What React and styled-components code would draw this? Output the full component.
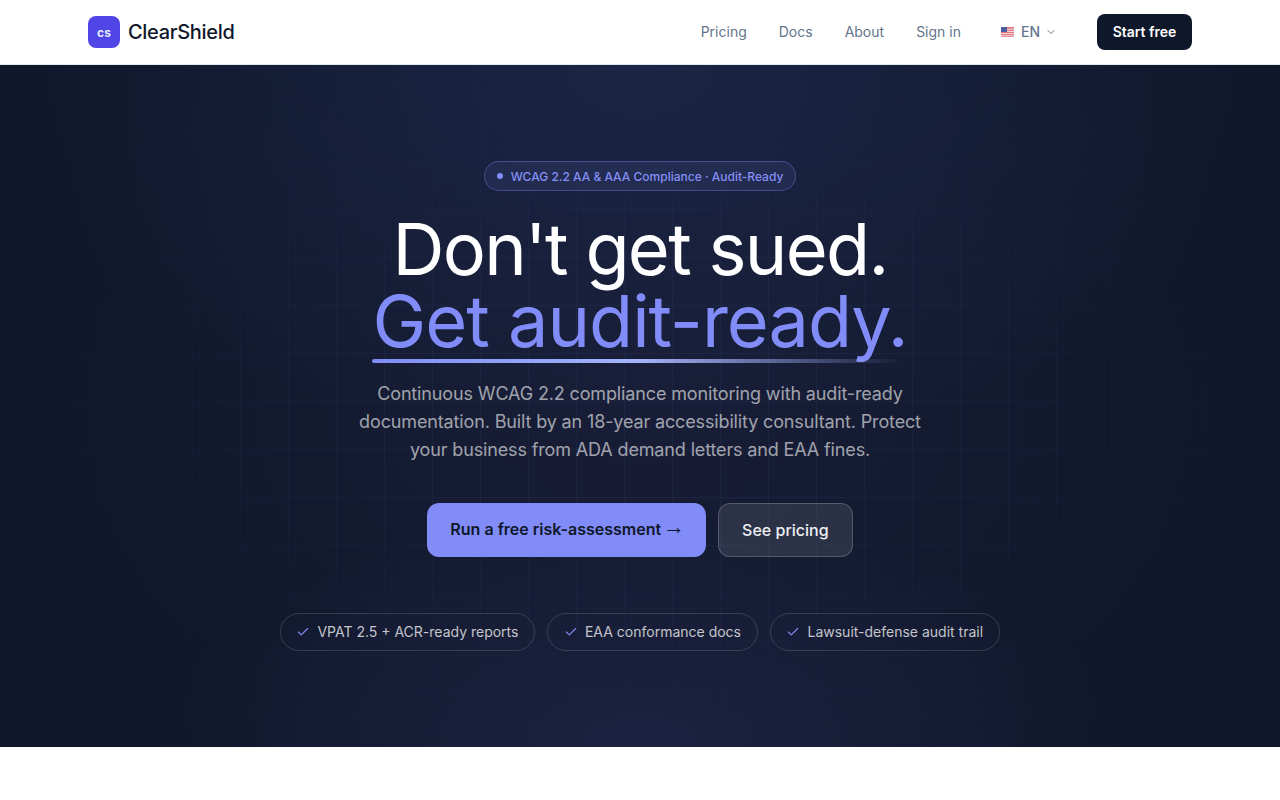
import React from 'react';
import styled, { createGlobalStyle } from 'styled-components';
import { Check, ChevronDown } from 'lucide-react';

const Global = createGlobalStyle`
    html, body { margin: 0; padding: 0; background: #fff; }
    body { font-family: Inter, "Liberation Sans", sans-serif; color: #0f172a; }
    * { box-sizing: border-box; }
`;

const Nav = styled.header`
    height: 65px;
    background: #fff;
    border-bottom: 1px solid #e2e8f0;
`;

const NavInner = styled.div`
    max-width: 1152px;
    height: 64px;
    margin: 0 auto;
    padding: 0 24px;
    display: flex;
    align-items: center;
    justify-content: space-between;
`;

const Brand = styled.a`
    display: flex;
    align-items: center;
    gap: 8px;
    font-size: 20px;
    font-weight: 500;
    letter-spacing: -0.3px;
    color: #0f172a;
`;

const BrandMark = styled.span`
    width: 32px;
    height: 32px;
    border-radius: 8px;
    background: #4f46e5;
    color: #e8ebff;
    display: flex;
    align-items: center;
    justify-content: center;
    font-size: 12px;
    font-weight: 700;
    letter-spacing: 0;
`;

const NavLinks = styled.nav`
    display: flex;
    align-items: center;
    gap: 32px;
`;

const NavLink = styled.a`
    padding-bottom: 2px;
    font-size: 14px;
    font-weight: 400;
    color: #64748b;
`;

const Lang = styled.div`
    display: flex;
    align-items: center;
    gap: 5px;
    padding: 0 8px;
    font-size: 14px;
    font-weight: 500;
    color: #64748b;

    > span { padding-bottom: 2px; }
`;

const FlagIcon = styled.svg`
    margin-right: 2px;
`;

const StartButton = styled.a`
    width: 95px;
    height: 36px;
    padding-bottom: 2px;
    display: flex;
    align-items: center;
    justify-content: center;
    border-radius: 8px;
    background: #0f172a;
    color: #fff;
    font-size: 14px;
    font-weight: 600;
`;

const Hero = styled.section`
    position: relative;
    height: 682px;
    padding-top: 96px;
    overflow: hidden;
    display: flex;
    flex-direction: column;
    align-items: center;
    background:
        radial-gradient(ellipse 50% 58% at 50% 0%, #1b2545 0%, rgba(27, 37, 69, 0) 100%),
        radial-gradient(ellipse 38% 34% at 50% 100%, #1c2240 0%, rgba(28, 34, 64, 0) 100%),
        radial-gradient(ellipse 52% 70% at 50% 50%, #181d36 0%, rgba(24, 29, 54, 0) 100%),
        #0f172a;
`;

const Grid = styled.div`
    position: absolute;
    inset: 0;
    background-image:
        linear-gradient(rgba(129, 140, 248, 0.06) 1px, transparent 1px),
        linear-gradient(90deg, rgba(129, 140, 248, 0.06) 1px, transparent 1px);
    background-size: 48px 48px;
    mask-image: radial-gradient(ellipse 50% 50% at 50% 50%, #000 40%, transparent 100%);
`;

const HeroBody = styled.div`
    position: relative;
    display: flex;
    flex-direction: column;
    align-items: center;
`;

const Badge = styled.div`
    height: 30px;
    padding: 0 12px;
    display: flex;
    align-items: center;
    gap: 8px;
    border-radius: 999px;
    border: 1px solid rgba(129, 140, 248, 0.35);
    background: rgba(129, 140, 248, 0.1);
    color: #858ff6;
    font-size: 12px;
    font-weight: 500;
`;

const Dot = styled.span`
    width: 6px;
    height: 6px;
    border-radius: 50%;
    background: #818cf8;
`;

const Title = styled.h1`
    margin: 22px 0 0;
    font-size: 72px;
    font-weight: 440;
    line-height: 72px;
    letter-spacing: -1.7px;
    text-align: center;
    color: #fff;
`;

const Accent = styled.span`
    position: relative;
    display: inline-block;
    letter-spacing: -1px;
    color: #818cf8;

    &::after {
        content: '';
        position: absolute;
        left: -1px;
        right: 5px;
        bottom: -6px;
        height: 4px;
        border-radius: 2px;
        background: linear-gradient(90deg, #818cf8, #a5b4fc 50%, transparent);
    }
`;

const Lead = styled.p`
    width: 576px;
    margin: 23px 0 0;
    font-size: 18px;
    line-height: 28px;
    letter-spacing: -0.14px;
    text-align: center;
    color: rgba(255, 255, 255, 0.6);
`;

const Actions = styled.div`
    display: flex;
    gap: 12px;
    margin-top: 39px;
`;

const PrimaryButton = styled.a`
    height: 54px;
    padding: 0 23px 3px;
    display: flex;
    align-items: center;
    gap: 2px;
    border-radius: 12px;
    background: #818cf8;
    color: #0f172a;
    font-size: 16px;
    font-weight: 600;
`;

const Arrow = styled.span`
    margin-right: -2px;
    padding-bottom: 3px;
    font-family: "Liberation Sans", sans-serif;
    font-size: 22px;
    font-weight: 700;
    line-height: 1;
`;

const GhostButton = styled.a`
    height: 54px;
    padding: 0 23px 1px;
    display: flex;
    align-items: center;
    border-radius: 12px;
    border: 1px solid rgba(255, 255, 255, 0.2);
    background: rgba(255, 255, 255, 0.1);
    color: #eef0f4;
    font-size: 16px;
    font-weight: 450;
`;

const Chips = styled.ul`
    display: flex;
    gap: 12px;
    margin: 56px 0 0;
    padding: 0;
    list-style: none;
`;

const Chip = styled.li`
    height: 38px;
    padding: 0 16px 2px 15.5px;
    display: flex;
    align-items: center;
    gap: 7px;
    border-radius: 999px;
    border: 1px solid rgba(255, 255, 255, 0.15);
    color: rgba(255, 255, 255, 0.75);
    font-size: 14px;
    svg { margin-top: 2px; color: #818cf8; }
`;

const Flag = () => (
    <FlagIcon width="13" height="10" viewBox="0 0 13 10">
        <rect width="13" height="10" rx="1" fill="#e0727c" />
        <path d="M0 2.2h13M0 4.4h13M0 6.6h13M0 8.8h13" stroke="#f4e0e2" strokeWidth="1" />
        <rect width="6" height="5" fill="#4a5fa0" />
    </FlagIcon>
);

const chips = ['VPAT 2.5 + ACR-ready reports', 'EAA conformance docs', 'Lawsuit-defense audit trail'];

export default function App() {
    return (
        <>
            <Global />
            <Nav>
                <NavInner>
                    <Brand><BrandMark>cs</BrandMark>ClearShield</Brand>
                    <NavLinks>
                        <NavLink>Pricing</NavLink>
                        <NavLink>Docs</NavLink>
                        <NavLink>About</NavLink>
                        <NavLink>Sign in</NavLink>
                        <Lang><Flag /><span>EN</span><ChevronDown size={12} /></Lang>
                        <StartButton>Start free</StartButton>
                    </NavLinks>
                </NavInner>
            </Nav>
            <Hero>
                <Grid />
                <HeroBody>
                    <Badge><Dot />WCAG 2.2 AA &amp; AAA Compliance · Audit-Ready</Badge>
                    <Title>Don't get sued.<br /><Accent>Get audit-ready.</Accent></Title>
                    <Lead>Continuous WCAG 2.2 compliance monitoring with audit-ready documentation. Built by an 18-year accessibility consultant. Protect your business from ADA demand letters and EAA fines.</Lead>
                    <Actions>
                        <PrimaryButton>Run a free risk-assessment <Arrow>→</Arrow></PrimaryButton>
                        <GhostButton>See pricing</GhostButton>
                    </Actions>
                    <Chips>
                        {chips.map(c => <Chip key={c}><Check size={14} />{c}</Chip>)}
                    </Chips>
                </HeroBody>
            </Hero>
        </>
    );
}
